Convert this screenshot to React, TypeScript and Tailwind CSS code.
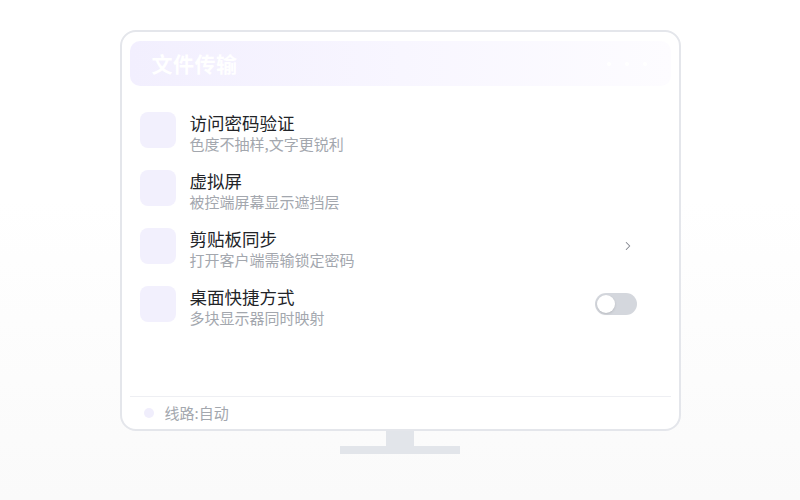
import { ChevronRight } from 'lucide-react';

const rows = [
  { title: '访问密码验证', sub: '色度不抽样,文字更锐利', action: 'none' },
  { title: '虚拟屏', sub: '被控端屏幕显示遮挡层', action: 'none' },
  { title: '剪贴板同步', sub: '打开客户端需输锁定密码', action: 'chevron' },
  { title: '桌面快捷方式', sub: '多块显示器同时映射', action: 'toggle' },
];

const Row = ({ title, sub, action }: { title: string; sub: string; action: string }) => (
  <div className="flex items-start h-[42px] pl-[10px] pr-[34px]">
    <div className="w-9 h-9 rounded-lg bg-[#f2f0fd] shrink-0" />
    <div className="ml-[14px] flex-1">
      <div className="text-[17.5px] leading-[22px] text-[#222428]">{title}</div>
      <div className="text-[15px] leading-[20px] text-[#a3a7ae]">{sub}</div>
    </div>
    {action === 'chevron' && (
      <div className="self-start mt-[11px] mr-[2px]">
        <ChevronRight className="w-[14px] h-[14px] text-[#80848c]" strokeWidth={1.75} />
      </div>
    )}
    {action === 'toggle' && (
      <div className="self-start mt-[7px] w-[42px] h-[22px] rounded-full bg-[#d4d7dd] p-[2px] flex items-center">
        <div className="w-[18px] h-[18px] rounded-full bg-white shadow-sm" />
      </div>
    )}
  </div>
);

export default function App() {
  return (
    <div
      className="h-[500px] w-[800px] flex flex-col items-center pt-[30px] bg-linear-to-b from-white from-40% to-[#fafafa]"
      style={{ fontFamily: '"Noto Sans CJK SC", "Noto Sans", sans-serif' }}
    >
      {/* monitor screen */}
      <div className="w-[561px] h-[401px] border-2 border-[#e4e6eb] rounded-[16px] bg-white px-2 pt-[9px] flex flex-col">
        <div className="h-[45px] rounded-[10px] bg-linear-to-r from-[#f2effe] via-[#f8f6ff] to-[#fdfcff] flex items-center pl-[22px] pr-[24px]">
          <span className="text-white font-bold text-[21px] tracking-wide">文件传输</span>
          <div className="ml-auto flex gap-[14px]">
            <span className="w-[4px] h-[4px] rounded-full bg-white" />
            <span className="w-[4px] h-[4px] rounded-full bg-white" />
            <span className="w-[4px] h-[4px] rounded-full bg-white" />
          </div>
        </div>

        <div className="flex-1 flex flex-col gap-4 pt-[26px]">
          {rows.map((r) => (
            <Row key={r.title} {...r} />
          ))}
        </div>

        <div className="h-[33px] border-t border-[#eeeff3] flex items-center pl-[14px]">
          <span className="w-[10px] h-[10px] rounded-full bg-[#f0eefc]" />
          <span className="ml-[11px] text-[15px] text-[#a3a7ae]">线路:自动</span>
        </div>
      </div>

      {/* stand */}
      <div className="w-[28px] h-[15px] bg-[#e2e5ea]" />
      <div className="w-[120px] h-[8px] bg-[#e2e5ea]" />
    </div>
  );
}
